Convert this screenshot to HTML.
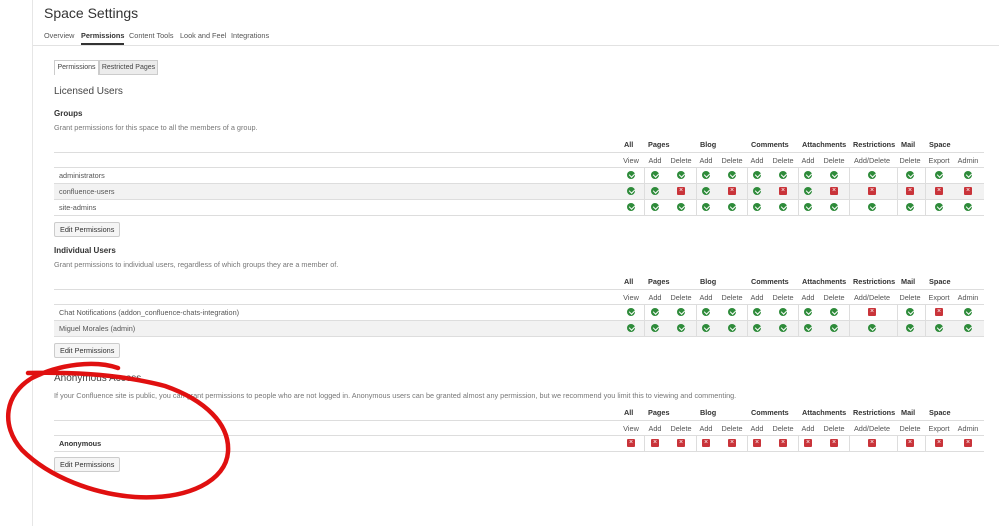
<!DOCTYPE html>
<html><head><meta charset="utf-8"><style>
*{margin:0;padding:0;box-sizing:border-box}
body{width:999px;height:526px;background:#fff;font-family:"Liberation Sans",sans-serif;color:#333;position:relative;overflow:hidden}
.a{position:absolute;white-space:nowrap}
.s{font-size:7.3px;color:#555}
.h{font-size:7.3px;font-weight:bold;color:#333}
.ln{position:absolute;left:54px;width:930px;height:1px;background:#ddd}
.vl{position:absolute;width:1px;background:#ddd}
.gr{position:absolute;left:54px;width:930px;background:#f2f2f2}
.btn{position:absolute;left:54px;height:15px;padding:0 5px;border:1px solid #ccc;border-radius:2px;background:#f5f5f5;font-size:7.3px;line-height:13px;color:#333}
.ok{position:absolute;width:8px;height:8px;border-radius:50%;background:#2e8b3a}
.ok:after{content:"";position:absolute;left:2.8px;top:1.3px;width:2.5px;height:4px;border:solid #fff;border-width:0 1.2px 1.2px 0;transform:rotate(45deg)}
.no{position:absolute;width:8px;height:8px;background:#c9343a;border-radius:1px;color:#fff;font-size:7px;line-height:8px;text-align:center}
</style></head><body>
<div class="a" style="left:0;top:0;width:33px;height:526px;background:#fff;border-right:1px solid #e6e6e6"></div>
<div class="a" style="left:44px;top:5px;font-size:14px;color:#333">Space Settings</div>
<div class="a s" style="left:44px;top:31px;color:#555">Overview</div>
<div class="a" style="left:81px;top:31px;font-size:7.3px;font-weight:bold;color:#333">Permissions</div>
<div class="a" style="left:81px;top:43px;width:43px;height:2px;background:#333"></div>
<div class="a s" style="left:129px;top:31px">Content Tools</div>
<div class="a s" style="left:180px;top:31px">Look and Feel</div>
<div class="a s" style="left:231px;top:31px">Integrations</div>
<div class="a" style="left:33px;top:45px;width:966px;height:1px;background:#e2e2e2"></div>
<div class="a" style="left:54px;top:60px;width:45px;height:15px;border:1px solid #ccc;border-bottom:none;background:#fff;font-size:7px;line-height:14px;text-align:center;color:#444">Permissions</div>
<div class="a" style="left:99px;top:60px;width:59px;height:15px;border:1px solid #ccc;background:#ececec;font-size:7px;line-height:14px;text-align:center;color:#444">Restricted Pages</div>
<div class="a" style="left:54px;top:86px;font-size:10px;color:#444">Licensed Users</div>
<div class="a" style="left:54px;top:109px;font-size:8px;font-weight:bold">Groups</div>
<div class="a s" style="left:54px;top:123px;color:#777">Grant permissions for this space to all the members of a group.</div>

<div class="a" style="left:54px;top:246px;font-size:8px;font-weight:bold">Individual Users</div>
<div class="a s" style="left:54px;top:260px;color:#777">Grant permissions to individual users, regardless of which groups they are a member of.</div>

<div class="a" style="left:54px;top:373px;font-size:10px;color:#444">Anonymous Access</div>
<div class="a s" style="left:54px;top:391px;color:#777">If your Confluence site is public, you can grant permissions to people who are not logged in. Anonymous users can be granted almost any permission, but we recommend you limit this to viewing and commenting.</div>

<div id="t"></div>

<div class="btn" style="top:222px">Edit Permissions</div>
<div class="btn" style="top:343px">Edit Permissions</div>
<div class="btn" style="top:457px">Edit Permissions</div>

<svg class="a" style="left:0;top:0" width="999" height="526">
<path d="M118 368 C95 360 60 364 32 378 C5 394 0 425 22 450 C50 478 95 494 135 497 C190 500 226 480 228 452 C230 424 205 400 165 386 C120 374 70 372 28 373" fill="none" stroke="#e01010" stroke-width="4.5" stroke-linecap="round"/>
</svg>

<script>
var cx=[631,655,681,706,732,757,783,808,834,872,910,939,968];
var vs=[644,696,747,798,849,897,925];
var sub=["View","Add","Delete","Add","Delete","Add","Delete","Add","Delete","Add/Delete","Delete","Export","Admin"];
var grp=[["All",624],["Pages",648],["Blog",700],["Comments",751],["Attachments",802],["Restrictions",853],["Mail",901],["Space",929]];
var h="";
function table(top,rows){
 grp.forEach(function(g){h+='<div class="a h" style="left:'+g[1]+'px;top:'+top+'px">'+g[0]+'</div>'});
 h+='<div class="ln" style="top:'+(top+12)+'px"></div>';
 sub.forEach(function(s,i){h+='<div class="a s" style="left:'+(cx[i]-20)+'px;width:40px;text-align:center;top:'+(top+16)+'px">'+s+'</div>'});
 var y=top+27;
 h+='<div class="ln" style="top:'+y+'px"></div>';
 rows.forEach(function(r,k){
  if(k%2==1)h+='<div class="gr" style="top:'+(y+1)+'px;height:15px"></div>';
  h+='<div class="a" style="left:59px;top:'+(y+4)+'px;font-size:7.3px;'+(r[2]?'font-weight:bold;color:#333':'color:#555')+'">'+r[0]+'</div>';
  for(var i=0;i<13;i++){var ok=r[1][i]=="1";h+='<div class="'+(ok?'ok':'no')+'" style="left:'+(cx[i]-4)+'px;top:'+(y+4)+'px">'+(ok?'':'&times;')+'</div>';}
  vs.forEach(function(v){h+='<div class="vl" style="left:'+v+'px;top:'+y+'px;height:16px"></div>'});
  y+=16;
  h+='<div class="ln" style="top:'+y+'px"></div>';
 });
}
table(140,[["administrators","1111111111111"],["confluence-users","1101010100000"],["site-admins","1111111111111"]]);
table(277,[["Chat Notifications (addon_confluence-chats-integration)","1111111110101"],["Miguel Morales (admin)","1111111111111"]]);
table(408,[["Anonymous","0000000000000",1]]);
document.getElementById("t").innerHTML=h;
</script>
</body></html>
